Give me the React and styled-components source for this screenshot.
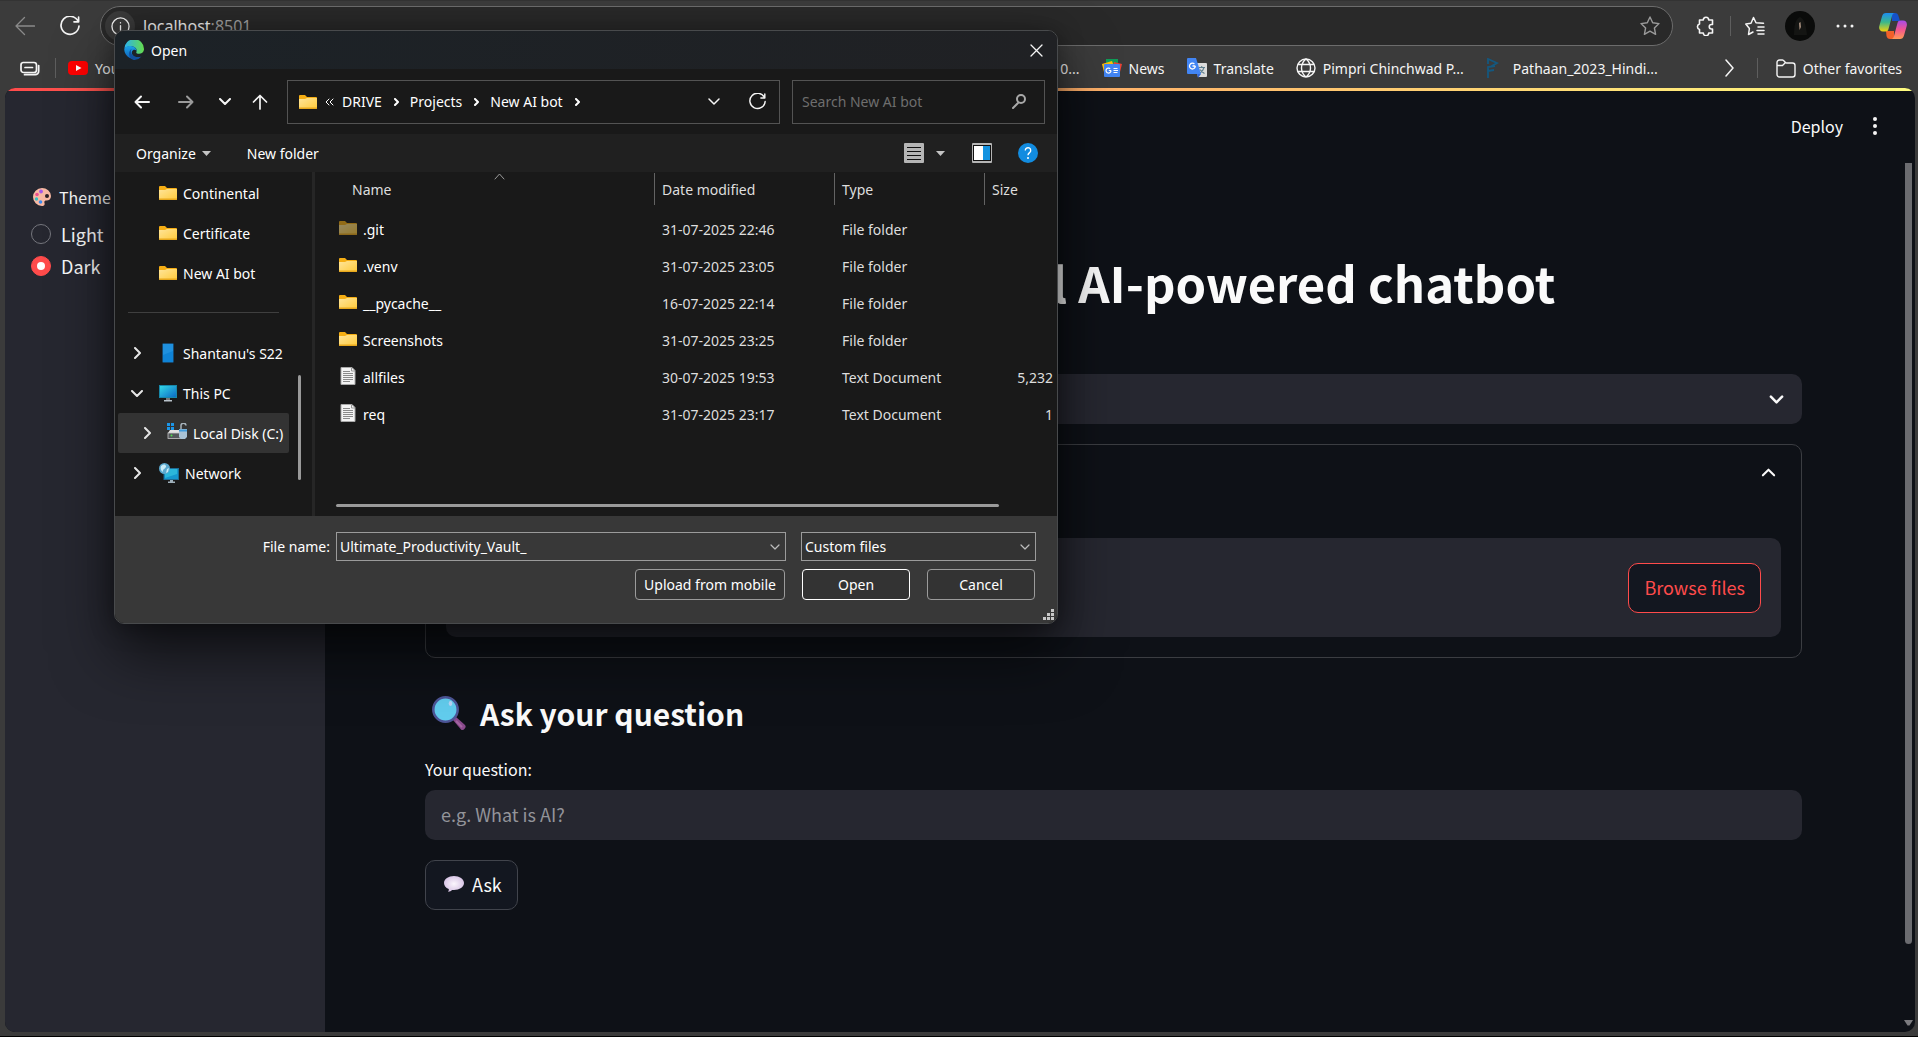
import React from "react";
import styled, { createGlobalStyle } from "styled-components";

const ui = `"Noto Sans", "Open Sans", sans-serif`;
const sans = `"Noto Sans CJK SC", "Open Sans", sans-serif`;

const GlobalStyle = createGlobalStyle`
  * { box-sizing: border-box; }
  body { margin: 0; background: #3b3b3b; overflow: hidden; }
  button, input, select { font: inherit; color: inherit; margin: 0; }
  svg { display: block; flex: none; }
`;

/* ---------- browser chrome ---------- */

const Browser = styled.div`
  position: relative;
  display: flex;
  flex-direction: column;
  height: 100vh;
  border-top: 1px solid #333;
  border-bottom: 1px solid #000;
  background: #3b3b3b;
  color: #f5f5f5;
  font-family: ${ui};
  font-size: 14px;
`;

const Toolbar = styled.div`
  display: flex;
  align-items: center;
  height: 50px;
  padding: 0 8px 0 10px;
`;

const IconButton = styled.button`
  display: grid;
  place-items: center;
  flex: none;
  width: ${(p) => p.$w || 30}px;
  height: 30px;
  padding: 0;
  border: 0;
  border-radius: ${(p) => (p.$round ? "50%" : "4px")};
  background: ${(p) => p.$bg || "none"};
  color: ${(p) => p.$color || "#f5f5f5"};
`;

const AddressBar = styled.div`
  display: flex;
  align-items: center;
  flex: 1;
  height: 40px;
  margin-right: 18px;
  padding: 0 7px 0 4px;
  border: 1px solid #6c6c6c;
  border-radius: 20px;
  background: #292929;
`;

const Address = styled.div`
  flex: 1;
  padding-left: 8px;
  font-size: 16px;
  line-height: 22px;
`;

const Port = styled.span`
  color: #a2a2a2;
`;

const Rule = styled.span`
  flex: none;
  width: 1px;
  height: 20px;
  background: #5e5e5e;
`;

const ToolGroup = styled.div`
  display: flex;
  align-items: center;
  gap: ${(p) => p.$gap}px;
`;

const Bookmarks = styled.nav`
  display: flex;
  align-items: center;
  height: 37px;
  padding: 0 16px 3px 17px;
`;

const BookmarkGroup = styled.div`
  display: flex;
  align-items: center;
  gap: ${(p) => p.$gap}px;
`;

const BookmarkRun = styled(BookmarkGroup)`
  flex: 1;
  justify-content: flex-end;
  padding-right: 45px;
`;

const Bookmark = styled.a`
  display: flex;
  align-items: center;
  gap: 7px;
  color: inherit;
  text-decoration: none;
  white-space: nowrap;
`;

/* ---------- web page ---------- */

const Page = styled.div`
  display: flex;
  flex-direction: column;
  flex: 1;
  min-height: 0;
  margin: 0 3px 4px 5px;
  overflow: hidden;
  border-radius: 10px;
  background: #0e1117;
  color: #fafafa;
  font-family: ${sans};
  font-size: 18px;
`;

const Accent = styled.div`
  flex: none;
  height: 3px;
  background: linear-gradient(90deg, #ff4b4b, #fffd80);
`;

const Columns = styled.div`
  display: flex;
  flex: 1;
  min-height: 0;
`;

const Sidebar = styled.aside`
  flex: none;
  width: 320px;
  padding: 93px 26px;
  background: #262730;
`;

const ThemeSet = styled.fieldset`
  display: grid;
  gap: 4px;
  margin: 0;
  padding: 0;
  border: 0;
`;

const Legend = styled.legend`
  display: flex;
  align-items: center;
  gap: 8px;
  padding: 0 0 10px 2px;
  font-size: 16px;
  line-height: 26px;
`;

const RadioLabel = styled.label`
  display: flex;
  align-items: center;
  gap: 10px;
  height: 28px;
  line-height: 28px;
`;

const Radio = styled.input`
  appearance: none;
  display: grid;
  place-items: center;
  width: 20px;
  height: 20px;
  margin: 0;
  border: 1px solid #75767d;
  border-radius: 50%;
  &:checked { border-color: #ff4b4b; background: #ff4b4b; }
  &:checked::after {
    content: "";
    width: 8px;
    height: 8px;
    border-radius: 50%;
    background: #fff;
  }
`;

const Main = styled.main`
  display: flex;
  flex-direction: column;
  flex: 1;
  min-width: 0;
`;

const TopBar = styled.header`
  display: flex;
  align-items: center;
  justify-content: flex-end;
  gap: 17px;
  height: 72px;
  padding: 0 25px 2px 0;
`;

const DeployButton = styled.button`
  padding: 0;
  border: 0;
  background: none;
  font-size: 16px;
`;

const ScrollArea = styled.div`
  display: flex;
  flex: 1;
  min-height: 0;
`;

const Content = styled.div`
  display: flex;
  flex-direction: column;
  flex: 1;
  padding: 86px 100px 0;
`;

const ScrollTrack = styled.div`
  display: flex;
  flex-direction: column;
  align-items: center;
  gap: 76px;
  width: 13px;
  padding: 0 0 6px;
  color: #7b7b7f;
`;

const ScrollThumb = styled.div`
  flex: 1;
  width: 7px;
  border-radius: 0 0 4px 4px;
  background: #6b6c70;
`;

const Title = styled.h1`
  margin: 0 0 59px;
  padding-left: 380px;
  font-size: 49px;
  line-height: 66px;
  font-weight: 700;
  text-align: center;
  white-space: nowrap;
`;

const SelectBox = styled.div`
  display: grid;
  align-items: center;
  height: 50px;
  border-radius: 10px;
  background: #262730;
  > * { grid-area: 1 / 1; }
  > svg { justify-self: end; margin-right: 18px; pointer-events: none; }
`;

const PlainSelect = styled.select`
  appearance: none;
  width: 100%;
  height: 100%;
  padding: 0 16px;
  border: 0;
  border-radius: 10px;
  background: none;
`;

const Expander = styled.section`
  display: flex;
  flex-direction: column;
  margin: 20px 0 0;
  padding: 0 20px 20px;
  border: 1px solid #3b3d42;
  border-radius: 10px;
`;

const ExpanderHead = styled.button`
  display: flex;
  align-items: center;
  justify-content: flex-end;
  height: 54px;
  margin-bottom: 39px;
  padding: 0 5px;
  border: 0;
  background: none;
`;

const Dropzone = styled.div`
  display: flex;
  flex-direction: column;
  align-items: flex-end;
  justify-content: center;
  height: 99px;
  padding: 0 20px;
  border-radius: 10px;
  background: #262730;
`;

const Button = styled.button`
  display: flex;
  align-items: center;
  justify-content: center;
  gap: 8px;
  width: fit-content;
  height: 50px;
  padding: 0 15px 2px;
  border: 1px solid ${(p) => (p.$danger ? "#ff4b4b" : "#41444c")};
  border-radius: 10px;
  background: #131720;
  color: ${(p) => (p.$danger ? "#ff4b4b" : "#fafafa")};
`;

const Heading = styled.h2`
  display: flex;
  align-items: center;
  gap: 13px;
  margin: 34px 0 0;
  padding-left: 7px;
  font-size: 30px;
  line-height: 42px;
  font-weight: 700;
`;

const QuestionForm = styled.form`
  display: flex;
  flex-direction: column;
  gap: 20px;
  margin-top: 22px;
`;

const Field = styled.label`
  display: grid;
  gap: 8px;
  font-size: 16px;
  line-height: 26px;
`;

const TextInput = styled.input`
  height: 50px;
  padding: 0 16px 2px;
  border: 0;
  border-radius: 10px;
  background: #262730;
  font-size: 18px;
  &::placeholder { color: #93949a; opacity: 1; }
`;

/* ---------- file dialog ---------- */

const Dialog = styled.div`
  position: absolute;
  left: 114px;
  top: 29px;
  display: flex;
  flex-direction: column;
  width: 944px;
  overflow: hidden;
  border: 1px solid #484a4c;
  border-radius: 10px;
  background: #191919;
  color: #fff;
  box-shadow: 0 30px 60px rgba(0, 0, 0, 0.6), 0 2px 24px rgba(0, 0, 0, 0.35);
`;

const TitleBar = styled.div`
  display: flex;
  align-items: center;
  gap: 7px;
  height: 38px;
  padding: 0 6px 0 9px;
  background: linear-gradient(90deg, #1c2227, #202124);
`;

const DialogTitle = styled.h2`
  flex: 1;
  margin: 0;
  font-size: 14px;
  font-weight: 400;
`;

const NavBar = styled.div`
  display: flex;
  align-items: center;
  height: 65px;
  padding: 0 12px;
`;

const NavButtons = styled.div`
  display: flex;
  align-items: center;
  gap: 10px;
  width: 160px;
`;

const PathBox = styled.div`
  display: flex;
  align-items: center;
  flex: 1;
  height: 44px;
  padding: 0 7px 0 11px;
  border: 1px solid #535353;
  > :last-child { margin-left: 13px; }
`;

const Crumbs = styled.ol`
  display: flex;
  align-items: center;
  gap: 8px;
  flex: 1;
  margin: 0;
  padding: 0 0 0 8px;
  list-style: none;
`;

const Crumb = styled.li`
  display: flex;
  align-items: center;
  gap: 8px;
`;

const SearchBox = styled.label`
  display: flex;
  align-items: center;
  width: 253px;
  height: 44px;
  margin-left: 12px;
  padding: 0 18px 0 9px;
  border: 1px solid #535353;
  color: #a8a8a8;
`;

const BareInput = styled.input`
  flex: 1;
  min-width: 0;
  padding: 0;
  border: 0;
  outline: 0;
  background: none;
  &::placeholder { color: #6e6e6e; opacity: 1; }
`;

const FileNameInput = styled(BareInput)`
  color: #fff;
`;

const CommandBar = styled.div`
  display: flex;
  align-items: center;
  height: 38px;
  padding: 0 19px 0 21px;
  background: #202020;
`;

const CommandButton = styled.button`
  display: flex;
  align-items: center;
  gap: ${(p) => p.$gap || 6}px;
  margin-right: ${(p) => p.$after || 0}px;
  padding: 0;
  border: 0;
  background: none;
`;

const Spacer = styled.span`
  flex: 1;
`;

const Browse = styled.div`
  display: flex;
  height: 344px;
`;

const Tree = styled.ul`
  flex: none;
  width: 174px;
  margin: 0;
  padding: 1px 0 0 3px;
  list-style: none;
`;

const TreeRow = styled.li`
  display: flex;
  align-items: center;
  gap: 6px;
  height: 40px;
  padding-left: ${(p) => (p.$nested ? 20 : 10)}px;
  background: ${(p) => (p.$active ? "#333" : "none")};
  border-radius: 2px;
  white-space: nowrap;
`;

const Twisty = styled.button`
  display: grid;
  place-items: center;
  flex: none;
  width: 18px;
  height: 18px;
  margin-right: ${(p) => (p.$nested ? 5 : 7)}px;
  padding: 0;
  border: 0;
  background: none;
  color: #e6e6e6;
`;

const TreeRule = styled.li`
  height: 40px;
  padding: 19px 10px 0;
  &::after { content: ""; display: block; height: 1px; background: #3f3f3f; }
`;

const TreeScroll = styled.div`
  flex: none;
  width: 26px;
  padding: 203px 0 0 9px;
  border-right: 3px solid #262626;
  &::after {
    content: "";
    display: block;
    width: 3px;
    height: 105px;
    border-radius: 2px;
    background: #9a9a9a;
  }
`;

const FilePane = styled.div`
  position: relative;
  display: flex;
  flex-direction: column;
  justify-content: space-between;
  flex: 1;
  min-width: 0;
  padding: 0 0 9px 21px;
`;

const SortMark = styled.span`
  position: absolute;
  left: 179px;
  top: 1px;
  color: #9b9b9b;
`;

const FileTable = styled.table`
  width: 100%;
  table-layout: fixed;
  border-collapse: collapse;
`;

const HeadCell = styled.th`
  width: ${(p) => (p.$w ? p.$w + "px" : "auto")};
  height: 39px;
  padding: 1px 0 0;
  vertical-align: top;
  text-align: left;
  font-weight: 400;
  color: #dedede;
`;

const HeadText = styled.span`
  display: block;
  height: 32px;
  padding-left: ${(p) => (p.$first ? 16 : 7)}px;
  border-left: ${(p) => (p.$first ? "0" : "1px solid #636363")};
  line-height: 34px;
`;

const Cell = styled.td`
  height: 37px;
  padding: 0 4px 0 8px;
  color: #dedede;
  text-align: ${(p) => (p.$right ? "right" : "left")};
`;

const NameCell = styled(Cell)`
  padding-left: 3px;
  color: #fff;
`;

const FileName = styled.span`
  display: flex;
  align-items: center;
  gap: 6px;
  > svg { margin-bottom: 3px; }
`;

const HScroll = styled.div`
  width: 663px;
  height: 3px;
  border-radius: 2px;
  background: #9a9a9a;
`;

const Footer = styled.form`
  position: relative;
  display: grid;
  grid-template-columns: 215px 450px 235px;
  column-gap: 6px;
  row-gap: 8px;
  height: 107px;
  padding-top: 16px;
  align-content: start;
  background: #383838;
`;

const FooterLabel = styled.label`
  align-self: center;
  text-align: right;
`;

const Combo = styled.div`
  display: flex;
  align-items: center;
  height: 29px;
  padding: 0 3px;
  border: 1px solid #9b9b9b;
`;

const ComboArrow = styled.button`
  display: grid;
  place-items: center;
  width: 14px;
  height: 20px;
  padding: 0;
  border: 0;
  background: none;
  color: #bdbdbd;
`;

const TypeBox = styled.div`
  display: grid;
  align-items: center;
  height: 29px;
  margin-left: 9px;
  margin-right: -9px;
  border: 1px solid #9b9b9b;
  background: #333;
  color: #bdbdbd;
  > * { grid-area: 1 / 1; }
  > svg { justify-self: end; margin-right: 5px; pointer-events: none; }
`;

const TypeSelect = styled.select`
  appearance: none;
  width: 100%;
  padding: 0 3px;
  border: 0;
  background: none;
  color: #fff;
`;

const Actions = styled.div`
  grid-column: 2 / 4;
  display: flex;
  justify-content: flex-end;
  gap: 17px;
  margin-right: -8px;
`;

const DialogButton = styled.button`
  width: ${(p) => p.$w || 108}px;
  height: 31px;
  padding: 0;
  border: 1px solid ${(p) => (p.$primary ? "#fff" : "#9b9b9b")};
  border-radius: 4px;
  background: #333;
  white-space: nowrap;
`;

const Grip = styled.span`
  position: absolute;
  right: 3px;
  bottom: 3px;
  color: #c8c8c8;
`;

/* ---------- drawings ---------- */

const Line = ({ d, w = 20, h = w, s = 1.5, box, cap = "round" }) => (
  <svg width={w} height={h} viewBox={box || `0 0 ${w} ${h}`} fill="none" stroke="currentColor" strokeWidth={s} strokeLinecap={cap} strokeLinejoin="round" aria-hidden="true">
    <path d={d} />
  </svg>
);

const RELOAD = "M18.2 5.5A9 9 0 1 0 19 10M18.6 1.2v4.6H14";

const Folder = ({ dim }) => (
  <svg width="18" height="16" viewBox="0 0 18 16" opacity={dim ? 0.55 : 1} aria-hidden="true">
    <defs>
      <linearGradient id="fold" x1="0" y1="0" x2="1" y2="1">
        <stop offset="0" stopColor="#ffe59a" />
        <stop offset="1" stopColor="#ffca3a" />
      </linearGradient>
    </defs>
    <path d="M0 2a1 1 0 0 1 1-1h5l2 2h9a1 1 0 0 1 1 1v4H0z" fill="#f5ae14" />
    <path d="M0 5h6l2-1h10v10a1 1 0 0 1-1 1H1a1 1 0 0 1-1-1z" fill="url(#fold)" />
    <path d="M0 13.5h18a1 1 0 0 1-1 1.500H1a1 1 0 0 1-1-1.500z" fill="#e8a81c" />
  </svg>
);

const Doc = () => (
  <svg width="18" height="18" viewBox="0 0 18 18" aria-hidden="true">
    <path d="M2 .5h11l3 3v14H2z" fill="#f4f4f4" stroke="#a9a9a9" />
    <path d="M12.500 1v3H16" fill="none" stroke="#999" />
    <path d="M4 4.500h7M4 6.500h10M4 8.500h10M4 10.500h10M4 12.500h10M4 14.500h7" stroke="#8a8a8a" />
  </svg>
);

const Phone = () => (
  <svg width="18" height="20" viewBox="0 0 18 20" aria-hidden="true">
    <rect x="3.500" y=".5" width="11" height="19" rx="1" fill="#0f83d6" stroke="#17486e" />
    <path d="M4 1h10v7L4 12z" fill="#2a9ae3" opacity=".6" />
  </svg>
);

const Monitor = () => (
  <svg width="18" height="18" viewBox="0 0 18 18" aria-hidden="true">
    <defs>
      <linearGradient id="scr" x1="0" y1="0" x2="1" y2="1">
        <stop offset="0" stopColor="#35dbe8" />
        <stop offset="1" stopColor="#0a66c2" />
      </linearGradient>
    </defs>
    <rect x=".5" y="1.500" width="17" height="12" fill="url(#scr)" stroke="#1787a8" />
    <path d="M7 14h4v2H7z" fill="#777" />
    <path d="M5 16h8v1.500H5z" fill="#b9c3cb" />
  </svg>
);

const Disk = () => (
  <svg width="20" height="20" viewBox="0 0 20 20" aria-hidden="true">
    <path d="M0 0h3v3H0zM4 0h3v3H4zM0 4h3v3H0zM4 4h3v3H4z" fill="#1c96e8" />
    <path d="M1 10l2-3h12l3 3z" fill="#e3e3e3" />
    <rect x="1" y="10" width="14" height="5.500" fill="#55585c" stroke="#c5c5c5" strokeWidth=".8" />
    <circle cx="4.500" cy="12.500" r="1" fill="#4be04b" />
    <path d="M14 6V3a2.500 2.500 0 0 1 5-.5" fill="none" stroke="#a8b4bc" strokeWidth="1.500" />
    <path d="M12 6h8v8l-2 2h-4l-2-2z" fill="#a9c3d6" />
    <path d="M12 6.500h8v2h-8z" fill="#3f9bdc" />
  </svg>
);

const NetworkIcon = () => (
  <svg width="20" height="20" viewBox="0 0 20 20" aria-hidden="true">
    <rect x="5" y="5.500" width="14.500" height="11" fill="#1597cf" stroke="#1d6d97" />
    <path d="M6 6h12v5L6 15z" fill="#35c3e0" opacity=".7" />
    <path d="M11 17h3v1.500h2V20H9v-1.500h2z" fill="#9fb0bb" />
    <circle cx="5.500" cy="5.500" r="5.500" fill="#5ba9cf" />
    <path d="M2 3c2-2 4-2 5 0S3 6 4 9C2 8 1 5 2 3zM8 6l2-1-1 4-2 1z" fill="#c9ecf8" />
  </svg>
);

const EdgeLogo = () => (
  <svg width="20" height="20" viewBox="0 0 20 20" aria-hidden="true">
    <defs>
      <linearGradient id="e1" x1="0" x2="1"><stop offset="0" stopColor="#2bb1ee" /><stop offset="1" stopColor="#65dd4b" /></linearGradient>
      <linearGradient id="e2" x1="0" y1="0" x2="0" y2="1"><stop offset="0" stopColor="#1ba3e8" /><stop offset="1" stopColor="#0f5fb8" /></linearGradient>
    </defs>
    <path d="M.3 9A9.800 9.800 0 0 1 20 9c.2 4-4 5.500-7 4.400-1.400-.6-.4-1.400-.3-2.600C12.800 8 10 6.200 7 6.200 3.500 6.200 1 7.500.3 9z" fill="url(#e1)" />
    <path d="M.2 9.500C.8 6.600 4 5.700 6.800 6c3.800.3 6 3 5.800 5-.8-1.300-2.400-1.600-3.600-.8-3 2 0 8 6 7.400A9.900 9.900 0 0 1 .2 9.500z" fill="url(#e2)" />
    <path d="M7.800 8.800c-3 4 1.600 10 9.700 7.700A9.800 9.800 0 0 1 9.500 20C4.500 18 3.500 11.500 7.800 8.800z" fill="#114f9c" />
  </svg>
);

const YouTube = () => (
  <svg width="20" height="16" viewBox="0 0 20 16" aria-hidden="true">
    <rect y="1" width="20" height="14" rx="4" fill="#f00" />
    <path d="M8 5l5.500 3L8 11z" fill="#fff" />
  </svg>
);

const NewsLogo = () => (
  <svg width="20" height="18" viewBox="0 0 20 18" aria-hidden="true">
    <path d="M4 0h12v6H4z" fill="#0f9d58" />
    <path d="M0 5l10-3 3 8-11 3z" fill="#ffc107" />
    <path d="M20 5l-8-2-2 8 8 2z" fill="#ea4335" />
    <rect x="2" y="5" width="16" height="13" rx="1" fill="#4285f4" />
    <path d="M9 11.500H6.800M9 11.500a2.500 2.500 0 1 1-.8-1.800M11.500 9.500h4M11.500 11.500h4.500M11.500 13.500h4" fill="none" stroke="#fff" strokeWidth="1.200" />
  </svg>
);

const TranslateLogo = () => (
  <svg width="20" height="20" viewBox="0 0 20 20" aria-hidden="true">
    <path d="M7 5h12a1 1 0 0 1 1 1v12a1 1 0 0 1-1 1h-8z" fill="#dcdcdc" />
    <path d="M11.500 9.500H18M14.700 8v1.500M17 9.500c-.6 2.500-2.500 4.500-4 5.500M13 11.500c.8 1.500 2.500 3 4.500 4" fill="none" stroke="#5f7f8f" strokeWidth="1.100" />
    <path d="M1 0h8l5 16H1a1 1 0 0 1-1-1V1a1 1 0 0 1 1-1z" fill="#4285f4" />
    <path d="M10 16h4l-3 4z" fill="#3367d6" />
    <path d="M8.300 8H5.500M8.300 8a2.900 2.900 0 1 1-.9-2" fill="none" stroke="#fff" strokeWidth="1.300" />
  </svg>
);

const PLogo = () => (
  <svg width="20" height="20" viewBox="0 0 20 20" fill="none" stroke="#14587f" strokeWidth="1.800" aria-hidden="true">
    <path d="M2 20V9l7-1M2 6V1l9 4-7 4M2 13l6-1" />
  </svg>
);

const Copilot = () => (
  <svg width="28" height="26" viewBox="0 0 28 26" aria-hidden="true">
    <defs>
      <linearGradient id="c1" x1="0" y1="0" x2="0" y2="1"><stop offset="0" stopColor="#1c8df0" /><stop offset=".5" stopColor="#3cb88a" /><stop offset="1" stopColor="#f3d20c" /></linearGradient>
      <linearGradient id="c2" x1="0" y1="0" x2="0" y2="1"><stop offset="0" stopColor="#a74be8" /><stop offset=".5" stopColor="#f3568f" /><stop offset="1" stopColor="#ff9a55" /></linearGradient>
    </defs>
    <path d="M13 0h3c2 0 3 1 3.500 3l1.500 5h-8z" fill="#1551c8" />
    <path d="M7 18h8v8h-4c-2 0-3-1-3.500-3z" fill="#f0602a" />
    <path d="M7 0h9c-2 0-2.600 1.500-3 3L9.500 16c-.5 1.800-1.500 2.500-3 2.500H4C1 18.500-.5 16 .3 13L3 3.500C3.600 1 5 0 7 0z" fill="url(#c1)" />
    <path d="M21 26h-9c2 0 2.600-1.500 3-3l3.500-13c.5-1.800 1.500-2.500 3-2.500H24c3 0 4.500 2.500 3.700 5.500L25 22.500c-.6 2.500-2 3.500-4 3.500z" fill="url(#c2)" />
  </svg>
);

const Avatar = () => (
  <svg width="30" height="30" viewBox="0 0 30 30" aria-hidden="true">
    <circle cx="15" cy="15" r="15" fill="#0a0b0a" />
    <path d="M9 24c0-8 1-16 6-18 5 2 6 10 7 18z" fill="#141513" />
    <path d="M14 12l1.500-1 .5 5-1.500 3z" fill="#a58d7d" />
  </svg>
);

const ViewIcon = () => (
  <svg width="20" height="20" viewBox="0 0 20 20" aria-hidden="true">
    <rect width="20" height="20" rx="1" fill="#b5b5b5" />
    <path d="M3 4.500h14M3 8.500h14M3 12.500h14M3 16.500h14" stroke="#111" />
  </svg>
);

const PaneIcon = () => (
  <svg width="20" height="20" viewBox="0 0 20 20" aria-hidden="true">
    <rect width="20" height="20" rx="1" fill="#b5b5b5" />
    <rect x="1" y="2" width="18" height="16" fill="#111" />
    <path d="M2 3h9v14H2z" fill="#fff" />
    <path d="M11 3h7v14h-7z" fill="#1292e0" />
  </svg>
);

const HelpIcon = () => (
  <svg width="20" height="20" viewBox="0 0 20 20" aria-hidden="true">
    <circle cx="10" cy="10" r="10" fill="#128ce0" />
    <path d="M7.300 7.500a2.700 2.700 0 1 1 4.400 2c-1 .8-1.700 1.300-1.700 2.700" fill="none" stroke="#fff" strokeWidth="1.400" />
    <circle cx="10" cy="15" r="1" fill="#fff" />
  </svg>
);

const Palette = () => (
  <svg width="18" height="18" viewBox="0 0 18 18" aria-hidden="true">
    <path d="M9 0a9 8.500 0 0 1 9 8c0 3-2 4.500-4.500 4.500-2 0-2.500 1-2 2.500.6 2-.8 3-2.500 3A9 9 0 0 1 9 0z" fill="#f8b9a4" />
    <circle cx="8" cy="3.500" r="1.900" fill="#a65ae8" />
    <circle cx="4" cy="6.500" r="1.800" fill="#ee4f8e" />
    <circle cx="3.500" cy="11" r="1.700" fill="#35bfc4" />
    <circle cx="7.500" cy="14" r="1.800" fill="#3c8cf0" />
    <circle cx="14" cy="8" r="2" fill="#2b2228" />
  </svg>
);

const Magnifier = () => (
  <svg width="35" height="35" viewBox="0 0 35 35" aria-hidden="true">
    <path d="M21 24l3-3 9 8c2 2-1.500 6.500-4 4.500z" fill="#8a4a8c" />
    <path d="M24 25l6 6" stroke="#a566a3" strokeWidth="2" />
    <circle cx="13.500" cy="13.500" r="12.200" fill="#62cdee" stroke="#4d5596" strokeWidth="2.500" />
    <ellipse cx="18.500" cy="7.500" rx="1.800" ry="2.400" fill="#b9d3f5" />
  </svg>
);

const Bubble = () => (
  <svg width="23" height="16" viewBox="-3 0 23 16" aria-hidden="true">
    <defs>
      <radialGradient id="bub"><stop offset="0" stopColor="#fbf6fd" /><stop offset="1" stopColor="#d9c6e6" /></radialGradient>
    </defs>
    <path d="M10 0c5.500 0 10 3 10 7s-4.500 7-10 7H8c-1 1-2.500 1.800-4 1.600.8-.8 1-1.800.7-2.600C1.600 11.800 0 9.600 0 7c0-4 4.500-7 10-7z" fill="url(#bub)" />
  </svg>
);

const Kebab = () => (
  <svg width="30" height="20" viewBox="0 0 30 20" fill="currentColor" aria-hidden="true">
    <circle cx="15" cy="3" r="2" /><circle cx="15" cy="10" r="2" /><circle cx="15" cy="17" r="2" />
  </svg>
);

const Dots = () => (
  <svg width="18" height="6" viewBox="0 0 18 6" fill="currentColor" aria-hidden="true">
    <circle cx="2" cy="3" r="1.500" /><circle cx="9" cy="3" r="1.500" /><circle cx="16" cy="3" r="1.500" />
  </svg>
);

const Caret = () => (
  <svg width="9" height="5" viewBox="0 0 9 5" aria-hidden="true"><path d="M0 0h9L4.500 5z" fill="#c4c4c4" /></svg>
);

const CHEVRON_DOWN = "M1 1l5 5 5-5";

/* ---------- data ---------- */

const bookmarks = [
  { icon: <NewsLogo />, text: "News" },
  { icon: <TranslateLogo />, text: "Translate" },
  { icon: <Line d="M19 10A9 9 0 1 1 1 10a9 9 0 0 1 18 0zM10 1c-6 5-6 13 0 18M10 1c6 5 6 13 0 18M2 6.500h16M2 13.500h16" s={1.4} />, text: "Pimpri Chinchwad P..." },
  { icon: <PLogo />, text: "Pathaan_2023_Hindi..." },
];

const files = [
  { name: ".git", date: "31-07-2025 22:46", type: "File folder", dim: true },
  { name: ".venv", date: "31-07-2025 23:05", type: "File folder" },
  { name: "__pycache__", date: "16-07-2025 22:14", type: "File folder" },
  { name: "Screenshots", date: "31-07-2025 23:25", type: "File folder" },
  { name: "allfiles", date: "30-07-2025 19:53", type: "Text Document", size: "5,232" },
  { name: "req", date: "31-07-2025 23:17", type: "Text Document", size: "1" },
];

const TreeItem = ({ icon, text, open, leaf, nested, active }) => (
  <TreeRow $nested={nested} $active={active}>
    <Twisty $nested={nested} disabled={leaf} aria-label={`Toggle ${text}`}>
      {!leaf && (open ? <Line d={CHEVRON_DOWN} w={12} h={7} s={2} /> : <Line d="M1 1l5 5-5 5" w={7} h={12} s={2} />)}
    </Twisty>
    {icon}
    {text}
  </TreeRow>
);

function OpenDialog() {
  return (
    <Dialog role="dialog" aria-labelledby="dlg-title">
      <TitleBar>
        <EdgeLogo />
        <DialogTitle id="dlg-title">Open</DialogTitle>
        <IconButton aria-label="Close"><Line d="M1 1l11 11M12 1L1 12" w={13} s={1.3} /></IconButton>
      </TitleBar>
      <NavBar>
        <NavButtons>
          <IconButton aria-label="Back"><Line d="M15 7H1.500M7 1.500L1.500 7 7 12.500" w={16} h={14} s={2} /></IconButton>
          <IconButton aria-label="Forward" $w={38} $color="#9b9b9b"><Line d="M1 7h13.500M9 1.500L14.500 7 9 12.500" w={16} h={14} s={2} /></IconButton>
          <IconButton aria-label="Recent" $w={20}><Line d={CHEVRON_DOWN} w={12} h={7} s={2} /></IconButton>
          <IconButton aria-label="Up"><Line d="M8 15V1.500M1.500 8L8 1.500 14.500 8" w={16} s={1.7} /></IconButton>
        </NavButtons>
        <PathBox>
          <Folder />
          <Crumbs>
            <Crumb><Line d="M4 1L1 4l3 3M8 1L5 4l3 3" w={9} h={8} s={1} /></Crumb>
            {["DRIVE", "Projects", "New AI bot"].map((name) => (
              <Crumb key={name}>{name}<Line d="M5 1l3 3-3 3" w={12} h={8} s={2} /></Crumb>
            ))}
          </Crumbs>
          <IconButton aria-label="History"><Line d={CHEVRON_DOWN} w={12} h={7} /></IconButton>
          <IconButton aria-label="Refresh"><Line d={RELOAD} box="0 0 20 20" w={17} s={1.7} /></IconButton>
        </PathBox>
        <SearchBox>
          <BareInput aria-label="Search New AI bot" placeholder="Search New AI bot" />
          <Line d="M6 9L1 14M13 5a4 4 0 1 1-8 0 4 4 0 0 1 8 0z" w={14} h={15} s={2} />
        </SearchBox>
      </NavBar>
      <CommandBar>
        <CommandButton $after={36}>Organize <Caret /></CommandButton>
        <CommandButton>New folder</CommandButton>
        <Spacer />
        <CommandButton aria-label="View" $after={27} $gap={12}><ViewIcon /><Caret /></CommandButton>
        <CommandButton aria-label="Preview pane" $after={26}><PaneIcon /></CommandButton>
        <CommandButton aria-label="Help"><HelpIcon /></CommandButton>
      </CommandBar>
      <Browse>
        <Tree>
          <TreeItem leaf icon={<Folder />} text="Continental" />
          <TreeItem leaf icon={<Folder />} text="Certificate" />
          <TreeItem leaf icon={<Folder />} text="New AI bot" />
          <TreeRule />
          <TreeItem icon={<Phone />} text="Shantanu's S22" />
          <TreeItem open icon={<Monitor />} text="This PC" />
          <TreeItem nested active icon={<Disk />} text="Local Disk (C:)" />
          <TreeItem icon={<NetworkIcon />} text="Network" />
        </Tree>
        <TreeScroll />
        <FilePane>
          <SortMark><Line d="M1 6l4.500-5L10 6" w={11} h={7} s={1} /></SortMark>
          <FileTable>
            <thead>
              <tr>
                <HeadCell $w={318}><HeadText $first>Name</HeadText></HeadCell>
                <HeadCell $w={180}><HeadText>Date modified</HeadText></HeadCell>
                <HeadCell $w={150}><HeadText>Type</HeadText></HeadCell>
                <HeadCell><HeadText>Size</HeadText></HeadCell>
              </tr>
            </thead>
            <tbody>
              {files.map((f) => (
                <tr key={f.name}>
                  <NameCell><FileName>{f.size ? <Doc /> : <Folder dim={f.dim} />}{f.name}</FileName></NameCell>
                  <Cell>{f.date}</Cell>
                  <Cell>{f.type}</Cell>
                  <Cell $right>{f.size}</Cell>
                </tr>
              ))}
            </tbody>
          </FileTable>
          <HScroll />
        </FilePane>
      </Browse>
      <Footer onSubmit={(e) => e.preventDefault()}>
        <FooterLabel htmlFor="fname">File name:</FooterLabel>
        <Combo>
          <FileNameInput id="fname" defaultValue="Ultimate_Productivity_Vault_" />
          <ComboArrow type="button" aria-label="Show names"><Line d="M1 1l4 4 4-4" w={10} h={6} s={1.2} /></ComboArrow>
        </Combo>
        <TypeBox>
          <TypeSelect aria-label="File type"><option>Custom files</option></TypeSelect>
          <Line d="M1 1l4 4 4-4" w={10} h={6} s={1.2} />
        </TypeBox>
        <Actions>
          <DialogButton type="button" $w={150}>Upload from mobile</DialogButton>
          <DialogButton $primary>Open</DialogButton>
          <DialogButton type="button">Cancel</DialogButton>
        </Actions>
        <Grip>
          <svg width="11" height="11" viewBox="0 0 11 11" fill="currentColor" aria-hidden="true">
            <path d="M8 0h3v3H8zM8 4h3v3H8zM4 4h3v3H4zM8 8h3v3H8zM4 8h3v3H4zM0 8h3v3H0z" />
          </svg>
        </Grip>
      </Footer>
    </Dialog>
  );
}

export default function App() {
  return (
    <>
      <GlobalStyle />
      <Browser>
        <Toolbar>
          <IconButton aria-label="Back" $color="#8a8a8a"><Line d="M19.500 10H1M9.500 1.500L1 10l8.500 8.500" s={1.3} /></IconButton>
          <IconButton aria-label="Reload" $w={60}><Line d={RELOAD} s={1.7} /></IconButton>
          <AddressBar>
            <IconButton aria-label="Site information" $round $bg="#3a3a3a">
              <Line d="M18.500 9.500a9 9 0 1 1-18 0 9 9 0 0 1 18 0zM9.500 8.500v5M9.500 5.500v.2" w={19} s={1.4} box="-.5 -.5 20 20" />
            </IconButton>
            <Address>localhost<Port>:8501</Port></Address>
            <IconButton aria-label="Add to favorites" $color="#9a9a9a">
              <Line d="M10 1l2.700 5.800 6.300.8-4.600 4.400 1.200 6.300L10 15.200l-5.600 3.100L5.600 12 1 7.600l6.300-.8z" s={1.4} />
            </IconButton>
          </AddressBar>
          <ToolGroup $gap={9}>
            <IconButton aria-label="Extensions">
              <Line d="M3.500 4h3.800a2.700 2.700 0 0 1 5.400 0h3.800v4.500h-1a2 2 0 0 0 0 4.500h1v4h-3.800a2.700 2.700 0 0 1-5.400 0H3.500v-3.600a2.800 2.800 0 0 1 0-5.400z" s={1.6} />
            </IconButton>
            <Rule />
            <IconButton aria-label="Favorites">
              <Line d="M8 16l-4.500 2.500.9-6L.8 8l5.200-.8L8.500 1.500l2.500 5.300 7.500.4M13 11h6M12 14.500h7M13 18h6" s={1.5} />
            </IconButton>
          </ToolGroup>
          <IconButton aria-label="Profile" $w={60}><Avatar /></IconButton>
          <ToolGroup $gap={16}>
            <IconButton aria-label="More"><Dots /></IconButton>
            <IconButton aria-label="Copilot" $w={34}><Copilot /></IconButton>
          </ToolGroup>
        </Toolbar>
        <Bookmarks>
          <BookmarkGroup $gap={12}>
            <IconButton aria-label="Workspaces" $w={26}>
              <Line d="M3 1.500h11a2.500 2.500 0 0 1 2.500 2.500v5a2.500 2.500 0 0 1-2.500 2.500H3.500A2.500 2.500 0 0 1 1 9V4a2.500 2.500 0 0 1 2-2.500zM5 6.500h7.500M18.700 4.500V10a3.500 3.500 0 0 1-3.500 3.700H4.500" h={15} s={1.7} />
            </IconButton>
            <Rule />
            <Bookmark href="#yt"><YouTube />YouTube</Bookmark>
          </BookmarkGroup>
          <BookmarkRun $gap={22}>
            <Bookmark href="#b0">0...</Bookmark>
            {bookmarks.map((b) => (
              <Bookmark key={b.text} href={`#${b.text}`}>{b.icon}{b.text}</Bookmark>
            ))}
          </BookmarkRun>
          <IconButton aria-label="More favorites" $w={54}><Line d="M1 1l7 8-7 8" w={9} h={18} s={1.5} /></IconButton>
          <BookmarkGroup $gap={18}>
            <Rule />
            <Bookmark href="#other">
              <Line d="M1 5V3.500A2.500 2.500 0 0 1 3.500 1h3C8 1 9 4 10.500 4h6A2.500 2.500 0 0 1 19 6.500v9a2.500 2.500 0 0 1-2.500 2.500h-13A2.500 2.500 0 0 1 1 15.500zM1 6.500h5.500L9 4" h={19} s={1.4} />
              Other favorites
            </Bookmark>
          </BookmarkGroup>
        </Bookmarks>
        <Page>
          <Accent />
          <Columns>
            <Sidebar>
              <ThemeSet>
                <Legend><Palette />Theme</Legend>
                <RadioLabel><Radio type="radio" name="theme" />Light</RadioLabel>
                <RadioLabel><Radio type="radio" name="theme" defaultChecked />Dark</RadioLabel>
              </ThemeSet>
            </Sidebar>
            <Main>
              <TopBar>
                <DeployButton>Deploy</DeployButton>
                <IconButton aria-label="Menu"><Kebab /></IconButton>
              </TopBar>
              <ScrollArea>
                <Content>
                  <Title>l AI-powered chatbot</Title>
                  <SelectBox>
                    <PlainSelect aria-label="Model"><option></option></PlainSelect>
                    <Line d={CHEVRON_DOWN} w={15} h={9} s={2.2} box="-.5 -.5 13 8" />
                  </SelectBox>
                  <Expander>
                    <ExpanderHead aria-label="Collapse uploads"><Line d="M1 6l5-5 5 5" w={15} h={9} s={1.8} box="-.5 -.5 13 8" /></ExpanderHead>
                    <Dropzone><Button $danger>Browse files</Button></Dropzone>
                  </Expander>
                  <Heading><Magnifier />Ask your question</Heading>
                  <QuestionForm onSubmit={(e) => e.preventDefault()}>
                    <Field>
                      Your question:
                      <TextInput placeholder="e.g. What is AI?" />
                    </Field>
                    <Button><Bubble />Ask</Button>
                  </QuestionForm>
                </Content>
                <ScrollTrack>
                  <ScrollThumb />
                  <svg width="9" height="6" viewBox="0 0 9 6" fill="currentColor" aria-hidden="true"><path d="M0 0h9L5.500 5.500h-2z" /></svg>
                </ScrollTrack>
              </ScrollArea>
            </Main>
          </Columns>
        </Page>
        <OpenDialog />
      </Browser>
    </>
  );
}
